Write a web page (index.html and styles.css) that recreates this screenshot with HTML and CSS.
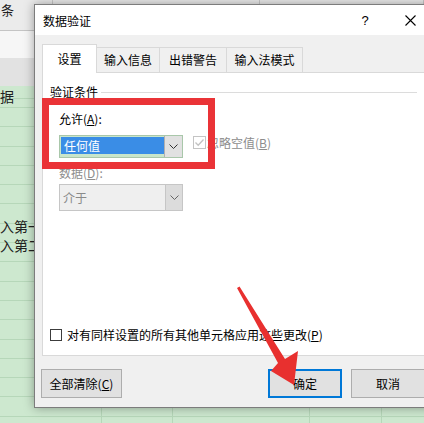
FILE: index.html
```html
<!DOCTYPE html>
<html lang="zh-CN">
<head>
<meta charset="utf-8">
<title>数据验证</title>
<link rel="stylesheet" href="styles.css">
</head>
<body>
<div class="sheet">
  <div class="srow shead">
    <div class="scell"><span class="cut">条</span></div>
    <div class="scell"></div>
    <div class="scell"></div>
  </div>
  <div class="srow sblank"></div>
  <div class="srow sgray"></div>
  <div class="sgreen">
    <p class="stxt first">据</p>
    <p class="stxt second">入第一</p>
    <p class="stxt">入第二</p>
  </div>
</div>

<div class="dialog">
  <div class="titlebar">
    <span class="title">数据验证</span>
    <span class="help">?</span>
    <span class="close"><svg width="11" height="11" viewBox="0 0 11 11"><path d="M0.5 0.5L10.5 10.5M10.5 0.5L0.5 10.5" stroke="#000" stroke-width="1.1" fill="none"/></svg></span>
  </div>
  <div class="dbody">
    <div class="tabs">
      <div class="tab active t1">设置</div>
      <div class="tab t2">输入信息</div>
      <div class="tab t3">出错警告</div>
      <div class="tab t4">输入法模式</div>
    </div>
    <div class="panel">
      <div class="group">
        <div class="legend"><span>验证条件</span><span class="gline"></span></div>
        <div class="fields">
          <div class="lbl">允许(<u>A</u>):</div>
          <div class="combo-row">
            <div class="combo combo-active">
              <div class="cval"><span class="sel">任何值</span></div>
              <div class="cbtn"><svg width="9" height="5" viewBox="0 0 9 5"><path d="M0.5 0.5L4.5 4.5L8.5 0.5" stroke="#333" stroke-width="1" fill="none"/></svg></div>
            </div>
            <div class="chk">
              <span class="box dis"><svg width="11" height="11" viewBox="0 0 11 11"><path d="M1.5 5.5L4.2 8.3L9.5 2.5" stroke="#c2c2c2" stroke-width="1.3" fill="none"/></svg></span>
              <span class="chktxt">忽略空值(<u>B</u>)</span>
            </div>
          </div>
          <div class="lbl dislbl">数据(<u>D</u>):</div>
          <div class="combo combo-dis">
            <div class="cval2">介于</div>
            <div class="cbtn2"><svg width="9" height="5" viewBox="0 0 9 5"><path d="M0.5 0.5L4.5 4.5L8.5 0.5" stroke="#666" stroke-width="1" fill="none"/></svg></div>
          </div>
        </div>
      </div>
      <div class="applyrow"><span class="box"></span><span class="applytxt">对有同样设置的所有其他单元格应用这些更改(<u>P</u>)</span></div>
    </div>
    <div class="footer">
      <button class="btn wide">全部清除(<u>C</u>)</button>
      <span class="spacer"></span>
      <button class="btn primary">确定</button>
      <button class="btn">取消</button>
    </div>
  </div>
</div>

<div class="redbox"></div>
<svg class="arrow" width="424" height="423" viewBox="0 0 424 423">
  <polygon points="237,288 278,363 271,371 294,385 298,351 285,359 239.5,286.5" fill="#e8302f"/>
</svg>
</body>
</html>
```

FILE: styles.css
```css
* { box-sizing: border-box; margin: 0; padding: 0; }
html, body { width: 424px; height: 423px; overflow: hidden; }
body {
  font-family: "Noto Sans CJK SC", "Noto Sans", sans-serif;
  font-size: 12px;
  color: #000;
  background: #cde8cf;
  position: relative;
}

/* spreadsheet background */
.sheet { width: 424px; height: 423px; display: flex; flex-direction: column; }
.srow { display: grid; grid-template-columns: 53px 207px 1fr; flex: none; }
.shead { height: 31px; background: #ebebeb; border-bottom: 1px solid #c4c4c4; }
.shead .scell { border-right: 1px solid #c9c9c9; overflow: hidden; }
.cut { display: block; font-size: 13px; line-height: 16px; padding: 2px 0 0 1px; color: #222; }
.sblank { height: 27px; background: #f6f6f6; }
.sgray { height: 28px; background: #e2e2e2; }
.sgreen {
  flex: 1;
  background:
    linear-gradient(to right, transparent 101px, #b6d7b9 101px 102px, transparent 102px 172px, #b6d7b9 172px 173px, transparent 173px 309px, #b6d7b9 309px 310px, transparent 310px 381px, #b6d7b9 381px 382px, transparent 382px),
    repeating-linear-gradient(to bottom, #b6d7b9 0 1px, transparent 1px 19.3px);
  background-position: 0 0, 0 21px;
  background-color: #cde8cf;
}
.stxt { font-size: 14px; line-height: 19px; color: #222; white-space: nowrap; }
.stxt.first { line-height: 21px; }
.stxt.second { margin-top: 110px; }

/* dialog */
.dialog {
  position: absolute; left: 34px; top: 4px;
  width: 400px; height: 404px;
  border: 1px solid #7c7c7c;
  background: #f0f0f0;
  box-shadow: 0 0 10px rgba(0,0,0,0.35);
  display: flex; flex-direction: column;
}
.titlebar {
  height: 30px; flex: none; background: #fff;
  display: flex; align-items: center;
  padding-left: 8px; padding-right: 5px;
}
.title { flex: 1; line-height: 16px; margin-top: 1px; }
.help { width: 30px; text-align: center; font-size: 13px; margin-right: 12px; font-family: "Liberation Sans", sans-serif; }
.close { width: 36px; display: flex; justify-content: center; align-items: center; }
.close svg { display: block; }

.dbody { flex: 1; display: flex; flex-direction: column; padding: 9px 8px 9px 7px; }
.tabs { height: 28px; flex: none; display: flex; align-items: flex-end; }
.tab {
  height: 25px; background: #f0f0f0;
  border: 1px solid #d9d9d9; border-left: none; border-bottom: none;
  display: flex; align-items: center; justify-content: center;
  line-height: 16px;
}
.tab.active {
  height: 29px; margin-bottom: -1px; background: #fff;
  border-left: 1px solid #d9d9d9;
  position: relative; z-index: 1;
}
.t1 { width: 55px; }
.t2 { width: 63px; }
.t3 { width: 67px; }
.t4 { width: 76px; }

.panel {
  flex: 1; background: #fff; border: 1px solid #d9d9d9;
  padding: 11px 7px 12px 7px;
  display: flex; flex-direction: column;
}
.legend { height: 16px; display: flex; align-items: center; line-height: 16px; }
.gline { flex: 1; height: 1px; background: #dcdcdc; margin-left: 3px; }
.fields { padding-left: 9px; }
.lbl { margin-top: 11px; line-height: 16px; }
.dislbl { margin-top: 7px; color: #8d8d8d; }
u { text-decoration: underline; text-underline-offset: 1px; }

.combo-row { margin-top: 8px; display: flex; align-items: flex-start; }
.combo { width: 124px; display: flex; }
.combo-active { height: 23px; border: 1px solid #a9c7aa; background: #c9e6ca; }
.cval { flex: 1; padding: 1px 0 0 1px; }
.sel { display: block; height: 17px; line-height: 17px; background: #3a8de6; color: #fff; padding-left: 3px; }
.cbtn { width: 18px; background: #e1e1e1; border-left: 1px solid #b0b0b0; display: flex; align-items: center; justify-content: center; }
.cbtn svg, .cbtn2 svg { display: block; }

.chk { margin-left: 10px; display: flex; align-items: center; height: 15px; margin-top: 0; }
.box { width: 13px; height: 13px; border: 1px solid #333; background: #fff; display: flex; align-items: center; justify-content: center; flex: none; }
.box.dis { border-color: #c4c4c4; }
.box svg { display: block; }
.chktxt { margin-left: 1px; color: #8d8d8d; line-height: 16px; white-space: nowrap; }

.combo-dis { margin-top: 3px; height: 27px; border: 1px solid #c6c6c6; background: #efefef; }
.cval2 { flex: 1; color: #8a8a8a; padding-left: 3px; display: flex; align-items: center; }
.cbtn2 { width: 17px; background: #dcdcdc; border-left: 1px solid #c6c6c6; display: flex; align-items: center; justify-content: center; }

.applyrow { margin-top: auto; height: 16px; display: flex; align-items: center; }
.applyrow .box { width: 12px; height: 12px; border-color: #3c3c3c; }
.applytxt { margin-left: 5px; line-height: 16px; white-space: nowrap; }

.footer { flex: none; margin-top: 13px; height: 29px; display: flex; margin-left: -1px; }
.spacer { flex: 1; }
.btn {
  font-family: inherit; font-size: 12px; color: #000;
  background: #e1e1e1; border: 1px solid #adadad;
  width: 74px; height: 29px; line-height: 16px;
  display: flex; align-items: center; justify-content: center;
}
.btn.wide { width: 81px; }
.btn.primary { border: 2px solid #0078d7; margin-right: 9px; }

/* overlays */
.redbox {
  position: absolute; left: 42px; top: 98px;
  width: 173px; height: 71px;
  border: 7px solid #ea3337;
}
.arrow { position: absolute; left: 0; top: 0; pointer-events: none; }
```
